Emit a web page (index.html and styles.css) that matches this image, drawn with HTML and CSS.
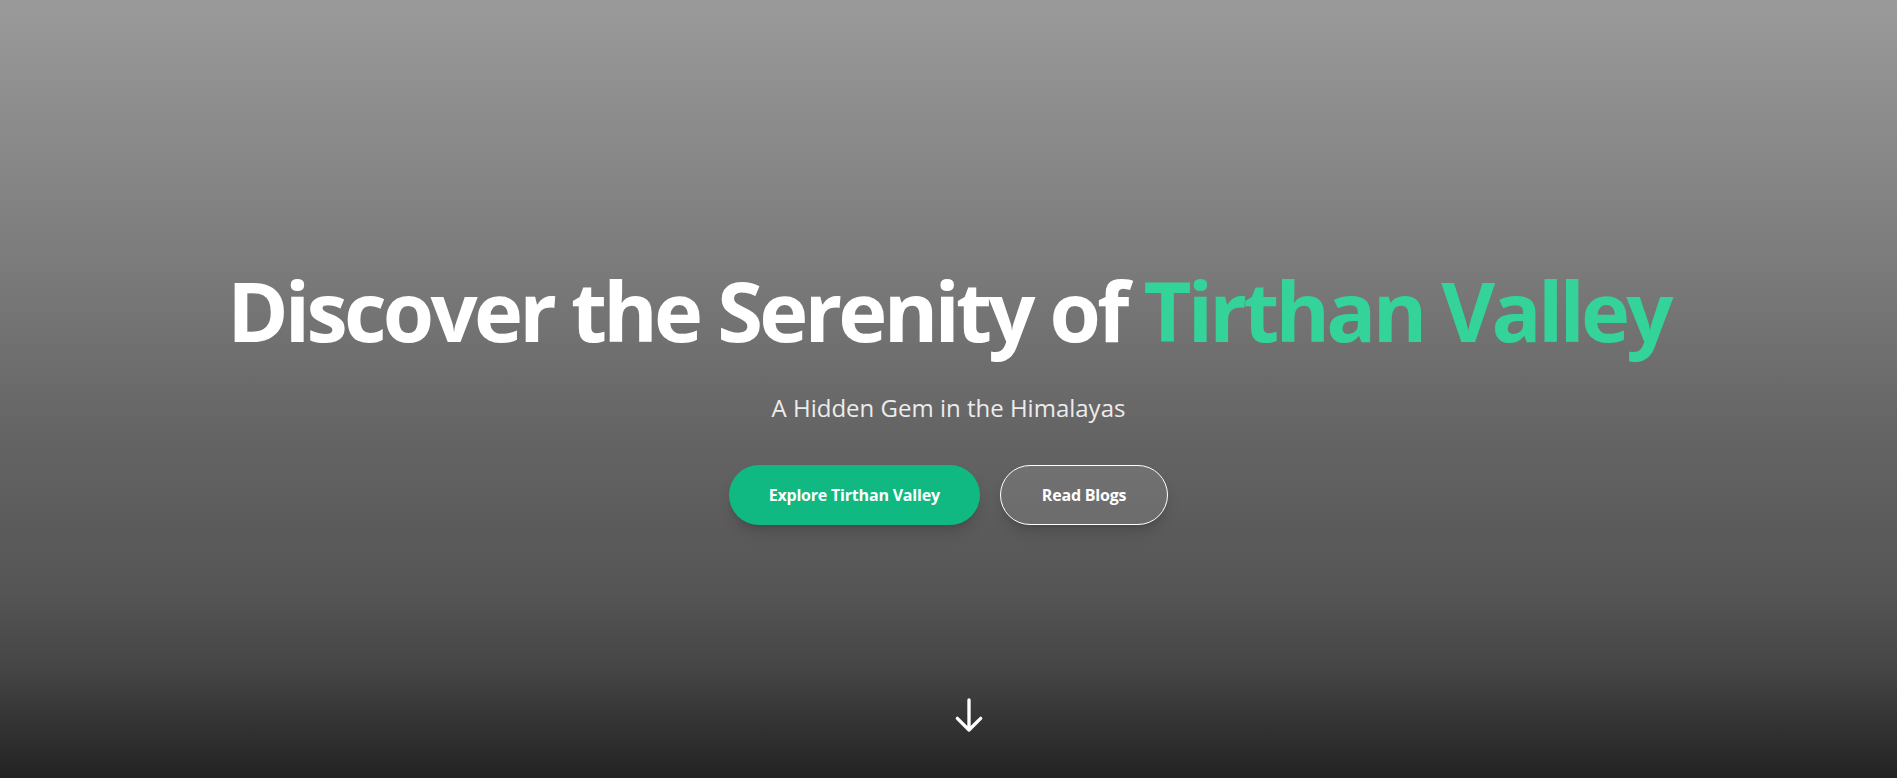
FILE: index.html
```html
<!DOCTYPE html>
<html lang="en">
<head>
<meta charset="utf-8">
<title>Tirthan Valley</title>
<link rel="stylesheet" href="styles.css">
</head>
<body>
<section class="hero">
  <div class="hero-content">
    <h1 class="hero-title">Discover the Serenity of <span class="accent">Tirthan Valley</span></h1>
    <p class="hero-subtitle">A Hidden Gem in the Himalayas</p>
    <div class="hero-actions">
      <a class="btn btn-primary" href="#">Explore Tirthan Valley</a>
      <a class="btn btn-outline" href="#">Read Blogs</a>
    </div>
  </div>
  <div class="scroll-indicator">
    <svg width="40" height="40" viewBox="0 0 24 24" fill="none" stroke="currentColor" stroke-width="2" stroke-linecap="round" stroke-linejoin="round"><path d="M19 14l-7 7m0 0l-7-7m7 7V3"/></svg>
  </div>
</section>
</body>
</html>
```

FILE: styles.css
```css
* { box-sizing: border-box; }
html, body { margin: 0; padding: 0; }
body {
  font-family: "Open Sans", "Noto Sans", sans-serif;
  color: #fff;
}
.hero {
  position: relative;
  height: 778px;
  display: flex;
  align-items: center;
  justify-content: center;
  text-align: center;
  background: linear-gradient(to bottom, #9a9a9a 0%, #7c7c7c 33%, #656565 55%, #555555 76%, #454545 86%, #222222 100%);
  overflow: hidden;
}
.hero-content {
  display: flex;
  flex-direction: column;
  align-items: center;
  margin-top: 11px;
}
.hero-title {
  margin: 0;
  font-size: 83px;
  font-weight: 700;
  line-height: 92px;
  letter-spacing: -3.75px;
}
.accent { color: #34d399; }
.hero-subtitle {
  margin: 36px 0 0;
  font-size: 24px;
  color: #ececec;
  line-height: 32px;
}
.hero-actions {
  display: flex;
  gap: 20px;
  margin-top: 41px;
}
.btn {
  display: inline-block;
  padding: 16px 40px;
  border-radius: 9999px;
  font-size: 16px;
  font-weight: 700;
  line-height: 28px;
  color: #fff;
  text-decoration: none;
  letter-spacing: -0.2px;
  box-shadow: 0 10px 15px -3px rgba(0,0,0,0.15), 0 4px 6px -4px rgba(0,0,0,0.15);
}
.btn-primary { background: #10b981; }
.btn-outline {
  background: rgba(255,255,255,0.1);
  border: 1px solid #fff;
  padding: 15px 41px;
}
.scroll-indicator {
  position: absolute;
  left: 50%;
  bottom: 43px;
  width: 40px;
  height: 40px;
  color: #fff;
}
.scroll-indicator svg { display: block; }
```
